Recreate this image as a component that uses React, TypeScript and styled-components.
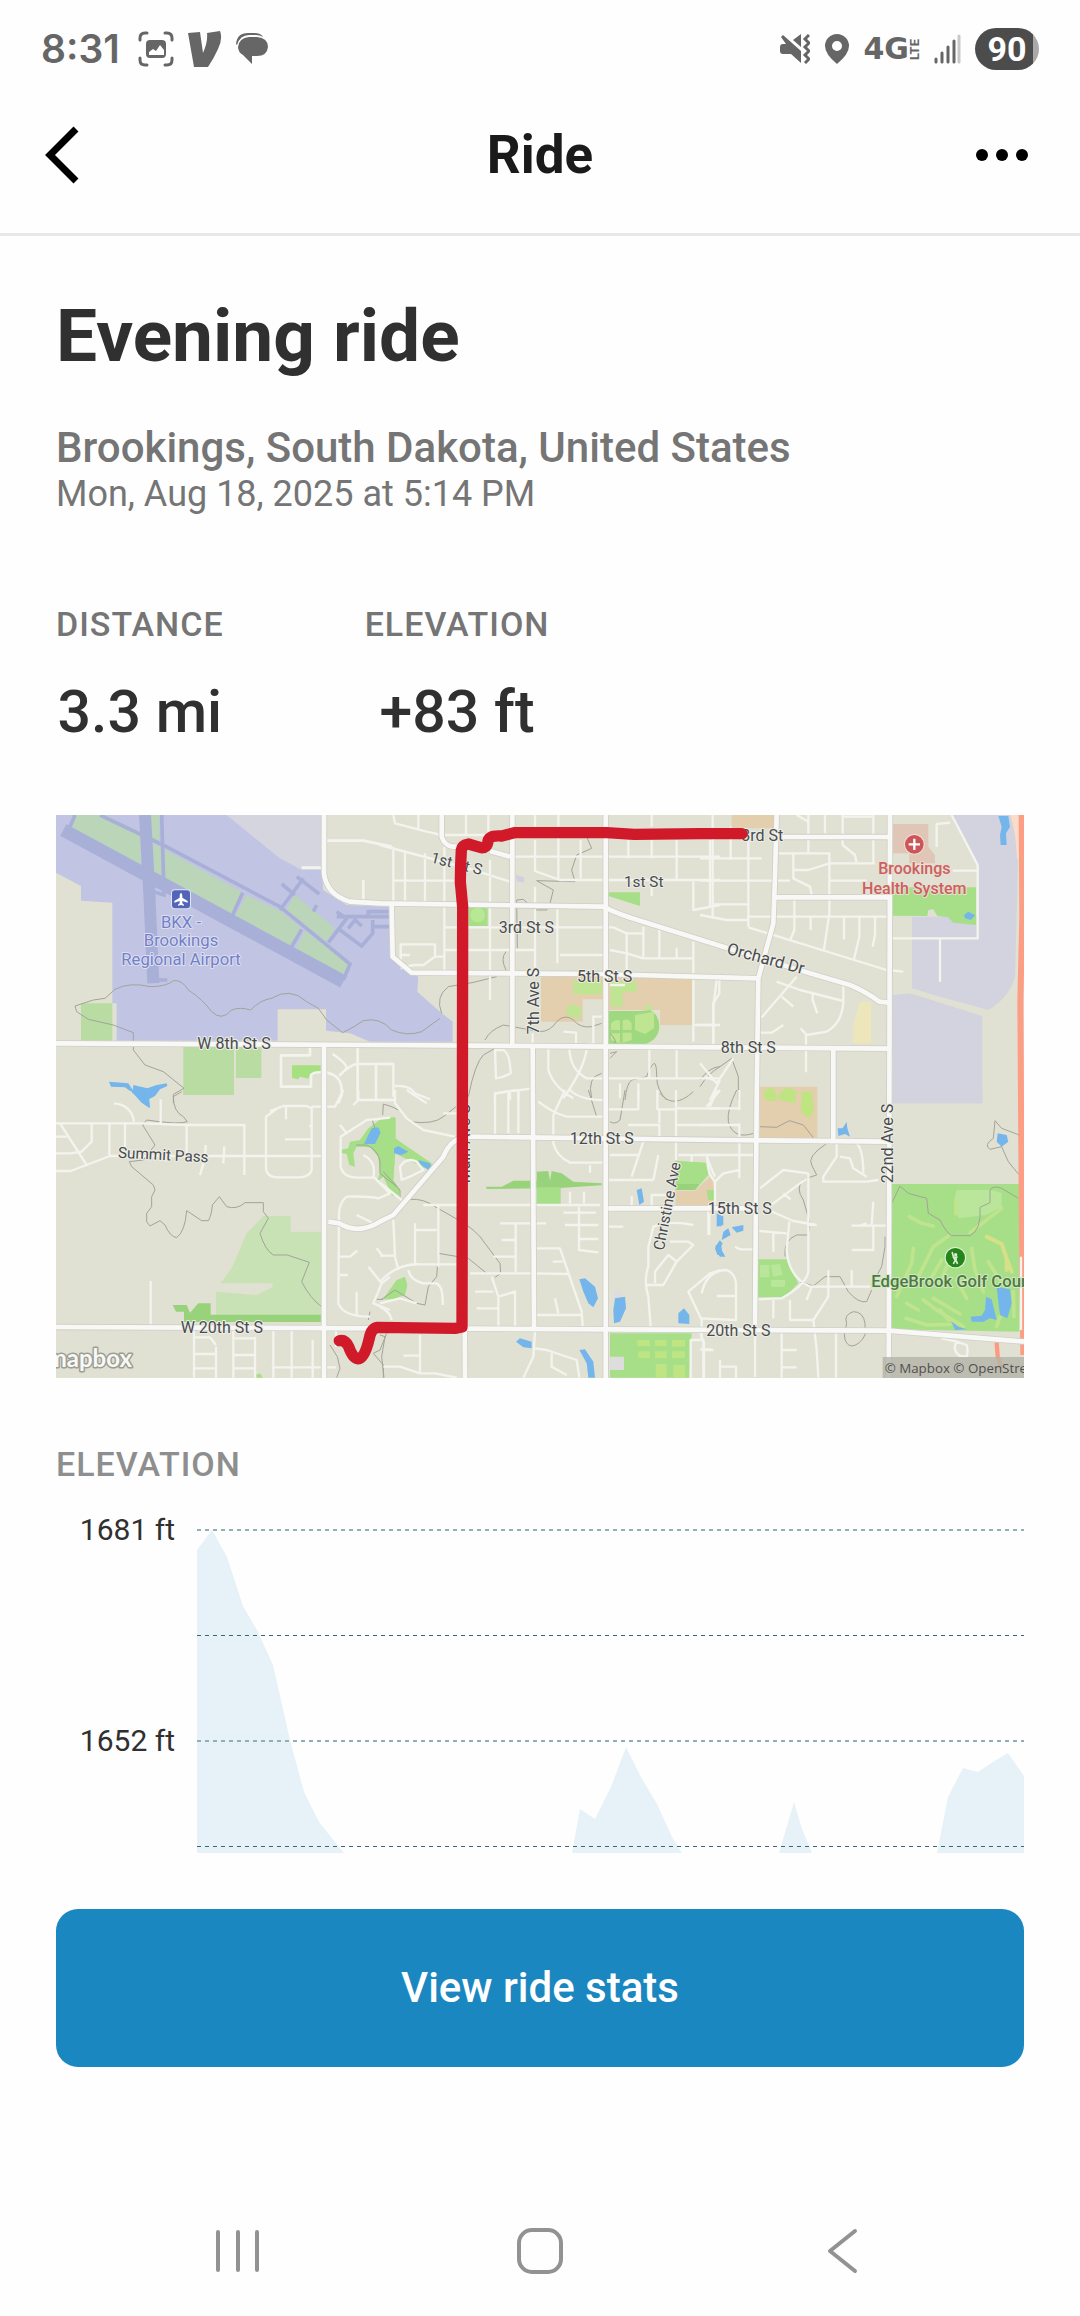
import React from "react";
import styled, { createGlobalStyle } from "styled-components";

const GlobalStyle = createGlobalStyle`
  *, *::before, *::after { box-sizing: border-box; }
  body {
    margin: 0;
    background: #fefefe;
    color: #303030;
    font-family: Roboto, "Liberation Sans", sans-serif;
  }
`;

const Screen = styled.div`
  display: flex;
  flex-direction: column;
  min-height: 100vh;
`;

const StatusBar = styled.div`
  display: flex;
  align-items: center;
  justify-content: space-between;
  height: 76px;
  padding: 22px 41px 0;
  color: #666;
  svg { display: block; flex: none; }
`;

const StatusGroup = styled.div<{ $gap: number }>`
  display: flex;
  align-items: center;
  gap: ${(p) => p.$gap}px;
`;

const Clock = styled.time`
  margin-right: 4px;
  font: 600 39px/48px Inter, sans-serif;
`;

const Network = styled.span`
  display: flex;
  align-items: center;
  font: 700 30px/32px "DejaVu Sans", sans-serif;
`;

const NetworkSuffix = styled.span`
  writing-mode: vertical-rl;
  transform: rotate(180deg);
  font: 700 13px/11px Roboto, sans-serif;
`;

const Battery = styled.span`
  display: grid;
  place-items: center;
  width: 64px;
  height: 42px;
  border-radius: 21px;
  background: linear-gradient(90deg, #4c4c4c 90%, #a9a9a9 90%);
  color: #fff;
  font: 700 34px/42px Roboto, sans-serif;
`;

const Header = styled.header`
  display: grid;
  grid-template-columns: 1fr auto 1fr;
  align-items: center;
  height: 160px;
  padding: 0 40px;
  border-bottom: 3px solid #e8e8e8;
`;

const HeaderTitle = styled.h2`
  margin: 0;
  color: #1a1a1a;
  font-size: 53px;
  line-height: 64px;
  font-weight: 700;
`;

const IconButton = styled.button<{ $end?: boolean }>`
  display: grid;
  place-items: center;
  justify-self: ${(p) => (p.$end ? "end" : "start")};
  padding: 0;
  border: 0;
  background: none;
  color: #000;
  cursor: pointer;
  svg { display: block; }
`;

const Content = styled.main`
  display: flex;
  flex-direction: column;
  padding: 56px 56px 0;
`;

const RideTitle = styled.h1`
  margin: 0 0 44px;
  font-size: 73px;
  line-height: 88px;
  font-weight: 700;
`;

const Place = styled.p`
  margin: 0;
  color: #757575;
  font-size: 42px;
  line-height: 48px;
  font-weight: 500;
`;

const RideDate = styled.p`
  margin: 0;
  color: #757575;
  font-size: 36px;
  line-height: 44px;
`;

const Stats = styled.dl`
  display: flex;
  gap: 141px;
  margin: 88px 0 67px;
`;

const Stat = styled.div`
  display: flex;
  flex-direction: column;
  align-items: center;
  gap: 32px;
`;

const StatLabel = styled.dt`
  color: #757575;
  font-size: 34px;
  line-height: 40px;
  font-weight: 500;
  letter-spacing: 1px;
`;

const StatValue = styled.dd`
  margin: 0;
  font-size: 59px;
  line-height: 72px;
  font-weight: 500;
`;

const MapPicture = styled.svg`
  display: block;
  width: 100%;
  height: auto;
  background: #e0e1d2;
  font-family: Roboto, "Liberation Sans", sans-serif;
`;

const SectionTitle = styled.h3`
  margin: 66px 0 28px;
  color: #8e8e8e;
  font-size: 34px;
  line-height: 40px;
  font-weight: 500;
  letter-spacing: 1px;
`;

const Chart = styled.div`
  display: grid;
  grid-template-columns: 141px 1fr;
  align-items: start;
`;

const AxisLabels = styled.div`
  display: flex;
  flex-direction: column;
  align-items: flex-end;
  gap: 175px;
  padding-right: 22px;
  font-size: 30px;
  line-height: 36px;
`;

const Plot = styled.svg`
  display: block;
  width: 100%;
  height: 341px;
  padding-top: 17px;
`;

const PrimaryButton = styled.button`
  height: 158px;
  margin-top: 56px;
  border: 0;
  border-radius: 22px;
  background: #1b87c0;
  color: #fff;
  font: 500 42px/48px Roboto, sans-serif;
  cursor: pointer;
`;

const SystemNav = styled.nav`
  display: grid;
  grid-template-columns: repeat(3, 1fr);
  height: 130px;
  margin-top: auto;
  padding: 0 87px;
  button { justify-self: center; color: #929292; }
`;

/* The map is drawn on a 2904 x 1689 sheet made of six tiles. */
const TILES = {
  a: "translate(-18 -15)",
  b: "translate(972 -15)",
  c: "translate(1932 -15)",
  d: "translate(-18 825)",
  e: "translate(972 825)",
  f: "translate(1932 825)",
};

const MAJOR_ROADS = [
  "M0 685L972 690L1992 697L2497 701",
  "M1236 965L1992 975L2497 980",
  "M0 1536L1236 1541L2497 1547L2904 1580",
  "M804 0V175Q812 240 882 260L972 265L1642 275Q1690 300 1762 320L1992 392L2262 475L2382 510Q2430 530 2470 560L2497 563",
  "M804 685V1689",
  "M817 1220L850 1225Q905 1260 972 1220L1012 1200L1162 1025Q1185 968 1236 965",
  "M1220 260L1227 1689",
  "M1369 0V688",
  "M1649 0V1689",
  "M1430 692L1434 1545",
  "M1157 0V65Q1165 92 1190 95L1250 95M1302 108L1362 125",
  "M1007 270L1010 425L1067 473L1632 477L2107 490",
  "M2162 0L2157 185L2152 325L2107 490L2102 850L2097 1530",
  "M2502 0L2498 1689",
  "M2160 247H2500M2160 66H2500",
  "M2332 700V975",
  "M1657 1180H2097",
];

function MapAreas() {
  return (
    <g>
      <g transform={TILES.a}>
        <path fill="#d4d5de" d="M530 15H815V185H755L690 145Z" />
        <path fill="#c1c5e3" d="M18 15H530L690 145L755 180H815L820 240L890 285L1025 290V440L1085 490L1105 500L1102 545L1170 605L1208 635V695H960L900 670L828 662V598H683V692H200V580H187V278L93 272V228L18 188Z" />
        <path fill="#bbd5b9" d="M70 15H170L272 78V165L55 52ZM300 15H328V92L305 85ZM308 100L335 112V200L308 190ZM345 120L575 245L545 315L347 212ZM590 255L690 302L755 355L722 412L552 322ZM735 255L855 355L830 395L708 300ZM765 362L900 462L880 502L735 420Z" />
        <path fill="none" stroke="#a9b0d8" strokeWidth="40" d="M40 60L880 515" />
        <path fill="none" stroke="#a9b0d8" strokeWidth="36" d="M285 15L298 250L310 520" />
        <path fill="none" stroke="#a9b0d8" strokeWidth="11" d="M60 50L75 15M150 15L345 108L690 290L900 462L880 510M335 15L342 255L310 245M320 510H352M578 248L548 315M755 358L722 415M690 300L760 205M740 200L808 252M695 222L735 255M800 285L790 305M835 398L890 325L860 305M860 320H1020M955 320V305H1025M870 360L935 408L968 370V330M895 355L915 330L935 348M968 350H1025" />
        <path fill="#b9dca2" d="M93 580H187V692H93ZM400 706H552V855H400ZM558 706H634V804H558Z" />
        <path fill="#a6e080" d="M726 766H812V790L785 790L775 806L750 800L744 808L726 804Z" />
        <path fill="#74b6ec" d="M177 815L235 820L248 840L240 843L225 832L183 830ZM250 825L292 835L320 825L350 820L352 828L330 838L315 858L297 868L300 893L285 870L262 858L247 848Z" />
      </g>
      <g transform={TILES.b}>
        <path fill="#a6df87" d="M266 292H323V348H266ZM685 247H780V288L685 258Z" />
        <circle cx="293" cy="315" r="22" fill="#b9e895" />
        <path fill="#d0d0e0" d="M408 195L432 202V218L410 214Z" />
        <path fill="#e3cead" d="M483 500H940V645H840V600H685V568H608V635H483Z" />
        <path fill="#bfe593" d="M580 510H665V553H580ZM690 515H770V545H728V590H692V545ZM560 590L580 583L606 595L598 628L560 615Z" />
        <path fill="#9fd97f" d="M685 603H780L810 600Q838 615 838 650Q835 690 795 702H685Z" />
        <path fill="#bfe593" d="M765 615L822 605V655L795 672L765 660ZM693 640Q710 625 720 632V660H693ZM728 632Q745 622 755 640V660H728ZM693 670H720V700L693 690ZM728 668H755V690L728 698ZM790 595L810 583L822 600Z" />
      </g>
      <g transform={TILES.c}>
        <path fill="#e3cead" d="M95 15H222V55H95Z" />
        <path fill="#e0c6b6" d="M578 42H685V110L705 135V160H628V130H578Z" />
        <path fill="#d2d3de" d="M755 15H940L955 120L945 500Q930 560 865 600L720 560L636 535V320H833V160L760 30ZM578 555L630 550L847 618V880H578Z" />
        <path fill="#a6df87" d="M578 232H828V345L760 338L745 322L712 318L700 298L685 300L682 318L578 317Z" />
        <path fill="#74b6ec" d="M895 18H925L930 50L918 70L920 105L902 105L900 75L905 50ZM792 315L805 305L826 316L812 330L795 325Z" />
        <path fill="#eee6bb" d="M480 575H513V700H458L462 640Z" />
        <path fill="#e3cead" d="M180 830H352V985H180Z" />
        <path fill="#bfe583" d="M195 840L215 832L230 850V872H200L190 855ZM240 845L265 832L290 845L285 880L235 870ZM305 845L335 845L342 905L325 925L302 905Z" />
      </g>
      <g transform={TILES.d}>
        <path fill="#b9dca2" d="M400 0H552V15H400Z" />
        <path fill="#74b6ec" d="M240 0H315L297 20L299 55L275 38Z" />
        <path fill="#c9e2b5" d="M640 378H722V425H818V675H498V605L620 615L668 590V580H512L545 535L590 430Z" />
        <path fill="#98d37c" d="M368 645H410L420 668L445 640H482V674H818V696H402V665H378Z" />
        <path fill="#a6df87" d="M998 83H1037V145L1090 190L1150 225L1125 235L1035 190L1030 270L1050 300L1045 320L1025 315L1000 260L980 275L990 250L985 200L960 172L920 170L910 190L915 230L898 225L890 192L870 188L872 180L895 175L900 155L930 150L955 115ZM999 628L1040 570L1065 560L1072 585L1065 615L1030 628Z" />
        <path fill="#74b6ec" d="M965 115L985 112L992 128L975 162L942 162Z" />
        <path fill="#a6df87" d="M618 855L630 850L638 863H620Z" />
      </g>
      <g transform={TILES.e}>
        <path fill="#98d37c" d="M318 290L365 290L400 272L470 272V245L505 243L510 272L515 243L545 250L580 275L665 280V286L540 294L320 297Z" />
        <path fill="#a6df87" d="M470 292H542V342H470ZM887 212L980 218L985 255L945 300H887ZM690 730H935L928 863H690ZM0 92L45 80V145L155 220L145 235L45 190L40 270Z" />
        <path fill="#e3cead" d="M887 302H945L995 255L1010 345H887Z" />
        <path fill="#98d37c" d="M887 282H958L945 300H887Z" />
        <path fill="#dcdddc" d="M690 800H732V840H690ZM702 605L715 595L728 620L702 625Z" />
        <path fill="#74b6ec" d="M42 175L55 168L85 185L65 195L42 190ZM115 210L150 220L155 235L145 240L120 222ZM598 568L615 565L645 590L654 625L640 652L625 640L610 605ZM705 625L735 620L738 655L720 695L702 700L700 660ZM895 670L912 655L928 675V702L895 700ZM408 755L420 745L455 755V775L430 772ZM598 780L615 778L640 815L645 863H625L620 820ZM770 300L785 295L792 335L778 345ZM1010 370L1030 380V405L1010 410ZM1005 475L1020 450L1028 490L1012 495Z" />
        <path fill="#bfe583" d="M772 750H810V768H772ZM825 750H860V768H825ZM876 750H915V770H876ZM775 784H810V804H775ZM825 784H860V804H825ZM876 784H915V804H876ZM827 822H860V863H827ZM880 825H915V863H880Z" />
      </g>
      <g transform={TILES.f}>
        <path fill="#a6df87" d="M570 282H958V725L570 718ZM172 508H262L295 580L255 622H172ZM0 220L22 225V255L0 278ZM20 300H47V330H25Z" />
        <path fill="#d2d3de" d="M578 0H847V40H578Z" />
        <path fill="#b9e69a" d="M770 300H875L905 310V350L860 375L775 385L762 330ZM180 525H208V562H180ZM212 525L240 522L248 555L220 560ZM213 570H255V590H213Z" />
        <path fill="none" stroke="#bfe48d" strokeWidth="11" strokeLinecap="round" strokeLinejoin="round" d="M628 380L665 400L700 408M768 330V372M905 355L810 428M745 438L700 470L655 560M640 475L635 520L590 620M690 570L725 510M740 530L715 590M815 475L825 540L850 605M865 515L905 580M770 570L800 625M620 640L655 660M670 630L710 660L790 710M700 625L780 672M618 685L680 705L750 703M720 660L745 690M940 605L942 680M890 710L900 680" />
        <path fill="none" stroke="#d7df87" strokeWidth="12" strokeLinecap="round" strokeLinejoin="round" d="M860 440L905 462L920 505L935 545M920 505V540" />
        <path fill="#74b6ec" d="M890 590L930 598L935 640L922 685L900 675L895 635ZM858 620L875 628L890 690L870 685L850 695H815L812 680L845 677L855 660ZM755 695L775 710L800 718L765 720ZM413 115L428 115L440 95L442 115L450 140L435 132L415 138ZM893 130L920 135L925 155L905 170L890 155ZM52 375L70 380L62 410L52 405ZM95 412L130 405V422L110 428ZM70 425L85 415L92 435L75 445L65 450ZM45 470L60 452L68 460L60 478ZM52 490L68 485L76 500L60 500Z" />
        <path fill="none" stroke="#fb9a80" strokeWidth="13" d="M890 757L893 800L905 835" />
      </g>
      <path fill="none" stroke="#fbdccb" strokeWidth="20" d="M2872 -5Q2890 50 2893 130" />
      <path fill="none" stroke="#fd9d84" strokeWidth="18" d="M2897 -5L2899 300L2893 560L2896 1000L2899 1380L2902 1620" />
    </g>
  );
}

function MapStreams() {
  return (
    <g fill="none" stroke="#a3a39a" strokeWidth="3" strokeLinejoin="round">
      <path transform={TILES.a} d="M402 835L340 785L285 765L250 720V668L190 645L115 628L80 605L75 588L130 570L165 565L195 538Q240 515 300 530Q350 530 370 512Q395 508 415 540Q460 570 485 605Q515 635 545 600Q570 590 602 600Q630 570 665 565Q720 530 770 575L805 595Q820 615 830 630L878 668Q915 650 940 632Q990 620 1025 660Q1070 680 1115 665L1170 625M402 835L370 853V880" />
      <path transform={TILES.b} d="M620 80L635 115L590 135L575 180L585 215L470 212L520 240L510 280L500 300L465 300L430 268L410 270L412 415M378 425Q360 445 378 480M185 610Q165 560 205 530Q280 520 350 500M265 860Q285 760 310 735L345 715M315 690Q330 660 370 645L480 665Q510 665 530 635Q555 610 580 630Q600 655 635 650L665 640M690 670Q710 690 705 700M690 730L710 725L690 745M755 810L800 800Q810 770 822 760Q830 760 830 800Q830 840 860 870M960 830Q985 790 1020 770M735 870Q740 820 755 810M665 790Q620 800 635 865" />
      <path transform={TILES.c} d="M0 810Q30 770 60 770L95 745L115 800V870" />
      <path transform={TILES.d} d="M395 5L370 20Q370 65 400 80L412 95Q390 105 290 90L278 105L315 165L280 210L238 215L245 230L310 285L315 300L305 320V350L290 370V395L300 408L330 392L345 405Q360 440 380 443Q405 425 410 362L455 392H475Q485 375 487 345L508 320L530 350Q560 360 585 338H640V365L655 385L630 430Q645 480 670 495H712L778 517L755 575Q780 625 815 650V690M918 165L950 165Q985 180 990 215V250L1040 290M975 115L965 85M998 75L1000 42Q1030 50 1045 60M980 628H999M840 765L862 800L870 835L860 863M1010 730L990 780L970 790L1000 825V863M955 690L960 665" />
      <path transform={TILES.e} d="M90 95Q160 105 190 80L228 50M90 328Q130 325 165 350L235 390Q290 420 315 460L360 520L362 550L345 562M320 550L265 505L175 490L170 560L145 590L135 645L110 640L45 600L5 628M625 0L650 80M735 0L720 90Q705 105 690 95M840 10Q880 60 940 5M10 245L60 300V330M0 735L15 740L5 800L12 863" />
      <path transform={TILES.f} d="M110 0Q80 60 85 95Q100 150 160 130M180 110L230 112L268 92L310 105L340 143M378 162Q320 200 335 225L350 255L310 268Q285 295 310 330L330 400L325 435L290 435Q250 450 255 500M300 575L340 588L375 560H420L445 605Q475 640 500 635L515 600M515 585L545 530L555 470V440M440 700Q430 675 460 665Q490 665 495 700V735Q480 765 455 768Q435 765 433 735ZM575 340L600 288L625 310L680 325L685 370L720 390Q740 430 755 437H810Q845 420 840 352L870 338V300Q880 285 905 295L955 325M958 135L905 115L885 92L880 145Q850 165 870 178L905 170L925 215L955 252" />
    </g>
  );
}

function MapMinorRoads() {
  return (
    <g fill="none" stroke="#f3f4ee" strokeWidth="8" strokeLinejoin="round">
      <path transform={TILES.a} d="M825 92H940L1025 110M940 210V270M755 173H815M780 706V736H693V830H783V795Q790 785 820 787Q880 790 875 855L865 880M830 830L820 835M848 732Q890 760 890 775L870 795Q900 765 920 762H1030M923 706V870M978 762V870" />
      <path transform={TILES.b} strokeWidth="7" d="M40 15L45 40L140 65L185 75H390M115 15V55M258 15V75M325 15V80M465 15V50M535 15V50M815 15V50M40 110V275M75 120V275M135 130V275M193 110V490M0 105L225 165M265 175L390 215M40 212H225M390 140H1020M465 90V183L540 210H1020M535 85V205M602 90V205M745 90V145M815 90V145M890 90V210M990 90V290M1020 285L940 300V215M815 210V258M330 150V570M465 230V500M532 290V460M195 352H700L740 370H790M195 420H465M540 435H670M62 465V403H165V440L130 465H100L62 475M65 435H90M165 440H190M740 370V480M790 350V440M690 420L740 430L790 445H940M838 360V445M890 415V445M940 395V695M690 525H735M940 645H1020M1010 510L1000 590V695M458 670V700M550 665L588 668V700M665 620H640V700L568 715Q570 780 620 805H1020M620 720Q610 780 550 865M505 715V780Q520 830 580 865M808 715V805M890 715V805M720 820V865M775 820V865M345 720H370Q390 730 392 790L370 800L348 805ZM345 870V850L458 835M390 845V870M415 840V870M0 762H40V860M45 828Q90 825 105 850L150 868" />
      <path transform={TILES.c} strokeWidth="7" d="M38 15V320M92 50V150M145 80V350M0 145H185M0 212H270M0 315L80 330H145M40 283H145M145 352L560 480L610 485M230 130H388V310L372 418M325 15V130M290 15L325 35M375 15V70M428 15V105L465 135L470 160M428 20H520M520 15V160M525 160H388L325 180H280M280 130V205L330 230L335 255M388 212H500M283 265V360L270 392M145 320H560M332 322V360M432 322V388M478 322V380L462 448M525 322V375L518 410M230 515L300 540L430 573M430 520V580Q425 640 380 665L320 675L302 655M290 500L185 622M245 560L280 590M338 545V570L352 610M180 668H215L250 645M318 670V787M58 510V550L40 580V705M0 645H38M0 760L50 820L100 745M60 810L30 870M40 810L15 800M710 110V42L750 38M758 182H833M720 385V515M575 385H833V165L755 15" />
      <path transform={TILES.d} strokeWidth="7" d="M18 100H280L410 105H583V255M30 100L108 222M18 243H62L180 198H820M125 100V155L95 185L62 190H18M18 140H50M178 100V195M225 100V195M410 105V195M332 28V100M192 40Q245 45 252 95M467 165L465 205L450 255M523 170L520 220M350 185L345 215M302 573V705M660 63L700 48H770L785 55V240Q780 260 750 262H680Q650 260 648 235V80L690 50M708 50V88M705 148H785M785 50H855L880 0M778 108H785M1020 83L950 90L872 140V230Q880 262 920 263H970M890 130L870 105M940 195Q980 215 970 260L1020 310L985 325Q960 318 890 320Q865 340 867 380L865 640Q880 680 960 680M920 375L970 400M865 500H900L922 482M980 475L1000 500M865 555H893M920 605V680M955 530L995 580L1020 560M995 580L970 640L1020 660M432 720V863M498 770V863M432 792H498M432 835H498M432 742H480L498 765M550 720V863M615 740V863M550 745H615M550 795H615M550 835H615M670 720V863M725 720V863M788 750V863M665 832H858M858 720L858 770M910 45L925 30V0M925 30H1030" />
      <path transform={TILES.e} strokeWidth="7" d="M45 0V40L80 85L130 120L225 140M0 30H45M80 0L140 40M190 70H230M345 135V10L410 0M385 0V130M415 0V130M60 230Q80 200 110 215L130 240L90 260L65 270ZM0 278L65 330M40 390L45 500L55 540M0 497H45M105 400V520M105 420H170M175 345V530M0 575Q50 520 120 523H230M130 345H660M85 540Q90 570 130 580H170Q190 590 188 645M0 650Q30 665 35 690M0 640L60 625L110 640M270 550H460L565 552M335 560L355 620V710M285 605H340M290 655H355M355 620L405 605V710M360 400H498M365 450H410M407 400V545M340 500H405M470 475H540L605 665L608 710M518 515H548M470 675H605M525 625L535 670M550 368H648M597 350V480L655 487M555 405H655M597 447H655M475 35Q520 70 560 80H670M520 75V160Q530 200 570 218H668M555 0L520 75M630 225V248M570 0Q600 30 670 30M570 305V340M612 305V340M684 58H775V0M745 105H838V145M838 100V55M832 0V58H888M690 195H775M790 155L755 260M835 195L820 270M888 0V210M890 55H1020M890 105H1020M895 195H1020M685 270H820M755 318V350M815 350V315H860M685 410H730M935 215V195M980 200Q995 240 1005 260M988 370V435M940 405Q870 390 820 410L805 470L805 530Q790 570 805 620L812 710M870 455H925L940 465L890 515L850 585H800M825 580V545L865 495L890 515M1020 540L990 550L925 605L965 690V745M500 780L590 810L598 863M515 790V830L560 855M465 775L500 780M70 797H120M120 735V850M10 830H60L120 850H165L230 863M465 725L460 800L430 863M932 863V750H970V863M970 780H1000M1010 0L990 50" />
      <path transform={TILES.f} strokeWidth="7" d="M20 50L60 0M25 55H120M118 0V60M0 105H118M118 100V265M0 195H160M22 200Q20 250 45 275L70 250L118 240M45 270V350M25 360V435M105 470L120 478H160M180 295L250 240L325 250M200 355L320 265M250 310L272 328M325 250V540Q325 580 245 625L175 628M205 360L280 393L350 405M178 423L260 430M268 395L260 480Q265 560 330 590H510M220 430V485M270 630V690H340M320 630L335 590M385 540V620L340 690L350 780L355 863M220 630V685M455 540V590M410 150V200L370 260V275H500L535 270M420 200L450 205L460 235L500 260M470 160Q490 180 490 250M520 335L515 405M455 407H560M480 407L500 400M520 410V480H455M5 610Q20 540 80 540Q105 550 108 580V690L0 685M50 618H108M0 725L12 760V863M0 778H35M60 863V810M60 830H108V863M245 725V863M245 780H290M245 832H290M408 725V863M165 740V860M725 745L770 755L800 765Q805 780 800 800L780 798Q755 780 770 755M963 500V720" />
    </g>
  );
}

function MapLabels() {
  return (
    <g fontSize="48" fill="#484b50" stroke="#eeeee6" strokeWidth="6" strokeLinejoin="round" paintOrder="stroke">
      <g textAnchor="middle" fill="#7480c6" stroke="#dcdff2" fontSize="50">
        <text x="375" y="339">BKX -</text>
        <text x="375" y="394">Brookings</text>
        <text x="375" y="450">Regional Airport</text>
      </g>
      <text x="424" y="702">W 8th St S</text>
      <text x="185" y="1028" fontSize="46" transform="rotate(3 185 1028)">Summit Pass</text>
      <text x="374" y="1555">W 20th St S</text>
      <text x="1122" y="142" fontSize="46" transform="rotate(14 1122 142)">1st St S</text>
      <text x="1704" y="215" fontSize="46">1st St</text>
      <text x="1328" y="355">3rd St S</text>
      <text x="1563" y="500">5th St S</text>
      <text transform="translate(1449 658) rotate(-90)">7th Ave S</text>
      <text transform="translate(1242 1105) rotate(-90)">Main Ave S</text>
      <text x="1541" y="988">12th St S</text>
      <text fontSize="46" transform="translate(1823 1308) rotate(-79)">Christine Ave</text>
      <text x="1955" y="1198">15th St S</text>
      <text x="1951" y="1562">20th St S</text>
      <text x="1994" y="715">8th St S</text>
      <text x="2056" y="78">3rd St</text>
      <text fontSize="50" transform="translate(2010 416) rotate(15)">Orchard Dr</text>
      <text transform="translate(2512 1105) rotate(-90)">22nd Ave S</text>
      <g textAnchor="middle" fill="#cc5f60" fontWeight="500" stroke="#e8ded2">
        <text x="2575" y="176">Brookings</text>
        <text x="2575" y="237">Health System</text>
      </g>
      <text x="2446" y="1416" fontSize="50" fill="#4a7a42" stroke="#d5e8c4" fontWeight="500">EdgeBrook Golf Course</text>
    </g>
  );
}

function RideMap() {
  return (
    <MapPicture viewBox="0 0 2904 1689" role="img" aria-label="Map of the ride">
      <MapAreas />
      <MapStreams />
      <MapMinorRoads />
      <g fill="none" strokeLinejoin="round">
        {MAJOR_ROADS.map((d) => <path key={d} d={d} stroke="#cfcfc8" strokeWidth="19" />)}
        {MAJOR_ROADS.map((d) => <path key={d} d={d} stroke="#f8f8f6" strokeWidth="14" />)}
      </g>
      <MapLabels />
      <g transform="translate(375 253)">
        <rect x="-30" y="-30" width="60" height="60" rx="12" fill="#e2e4f5" />
        <rect x="-27" y="-27" width="54" height="54" rx="9" fill="#5265b8" />
        <path fill="#fff" d="M0 -20Q4 -18 4 -10V-5L20 5V10L4 5V12L9 16V19L0 17L-9 19V16L-4 12V5L-20 10V5L-4 -5V-10Q-4 -18 0 -20Z" />
      </g>
      <g transform="translate(2575 88)">
        <circle r="31" fill="#f1dfda" />
        <circle r="28" fill="#cc5558" />
        <path stroke="#fff" strokeWidth="7" d="M-17 0H17M0 -17V17" />
      </g>
      <g transform="translate(2698 1328)">
        <circle r="32" fill="#e2f2d6" />
        <circle r="29" fill="#23851a" />
        <circle cx="1" cy="-9" r="5" fill="#d9ecd2" />
        <path fill="none" stroke="#d9ecd2" strokeWidth="5" strokeLinecap="round" d="M-9 -15L-5 0L5 -2M0 0V7L-5 17M1 6L6 17" />
        <path stroke="#d9ecd2" strokeWidth="9" d="M0 -3V7" />
      </g>
      <path
        fill="none"
        stroke="#d01a2a"
        strokeWidth="34"
        strokeLinecap="round"
        strokeLinejoin="round"
        d="M2058 56H1932L1735 58L1652 53H1375L1337 63Q1300 60 1296 78Q1294 100 1275 98L1237 87Q1218 90 1216 105L1214 150L1213 200L1220 275L1219 1000L1218 1536L1200 1540L965 1537Q945 1540 940 1570Q925 1635 905 1631Q890 1630 878 1595Q868 1573 850 1577"
      />
      <text x="228" y="1656" textAnchor="end" fontSize="72" fontWeight="700" fontFamily="Lato, sans-serif" fill="#f8f8f4" stroke="#9c9d94" strokeWidth="9" strokeLinejoin="round" paintOrder="stroke">mapbox</text>
      <rect x="2480" y="1626" width="424" height="63" fill="#b3b4a8" fillOpacity="0.8" />
      <text x="2486" y="1675" fontSize="40" fontFamily="'Open Sans', sans-serif" fill="#505050">© Mapbox © OpenStreetMap</text>
    </MapPicture>
  );
}

const AREA =
  "M0 324V21L15 1L30 28L46 77L61 103L76 136L93 211L107 263L122 293L138 313L147 324Z" +
  "M375 324L383 280L398 290L414 258L429 218L445 250L460 275L475 308L485 324Z" +
  "M582 324L597 273L605 300L615 324Z" +
  "M740 324L751 268L766 239L781 243L796 233L811 224L827 247V324Z";

const GRID_LINES = [
  { y: 1, width: 2, color: "#8fb0b4" },
  { y: 106.5, width: 1, color: "#356a74" },
  { y: 212, width: 2, color: "#8fb0b4" },
  { y: 317.5, width: 1, color: "#356a74" },
];

function ElevationChart() {
  return (
    <Chart>
      <AxisLabels>
        <span>1681 ft</span>
        <span>1652 ft</span>
      </AxisLabels>
      <Plot viewBox="0 0 827 324" preserveAspectRatio="none" role="img" aria-label="Elevation profile">
        <path d={AREA} fill="#e6f2f8" />
        {GRID_LINES.map((line) => (
          <line key={line.y} x1="0" x2="827" y1={line.y} y2={line.y} stroke={line.color} strokeWidth={line.width} strokeDasharray="4 4" />
        ))}
      </Plot>
    </Chart>
  );
}

function StatusIcons() {
  return (
    <StatusBar>
      <StatusGroup $gap={14}>
        <Clock>8:31</Clock>
        <svg width="36" height="36" viewBox="0 0 36 36" fill="none" stroke="currentColor" strokeWidth="3">
          <path strokeLinecap="round" d="M2 9V7Q2 2 7 2H9M27 2H29Q34 2 34 7V9M34 27V29Q34 34 29 34H27M9 34H7Q2 34 2 29V27" />
          <rect x="8" y="9" width="20" height="18" rx="4" fill="currentColor" stroke="none" />
          <path fill="#fefefe" stroke="none" d="M11 24V21L15 18L18 20L22 14L26 19V24Z" />
        </svg>
        <svg width="34" height="36" viewBox="0 0 34 36" fill="currentColor">
          <path d="M0 2L12 1L15 22Q20 11 19 2L32 0Q35 8 30 18Q26 27 20 36H6Z" />
        </svg>
        <svg width="32" height="32" viewBox="0 0 32 32" fill="currentColor">
          <path d="M0 11Q1 0 12 0H18Q25 0 27 4Q24 2 20 2H13Q4 2 1 12Z" />
          <path d="M13 4H21Q32 5 32 14Q31 23 21 23H16V31L7 22Q2 19 2 14Q3 5 13 4Z" />
        </svg>
      </StatusGroup>
      <StatusGroup $gap={14}>
        <svg width="30" height="30" viewBox="0 0 30 30" fill="currentColor">
          <path d="M0 13Q0 10 3 10H6L1 3L3 1L21 17V29L11 20H3Q0 20 0 17ZM13 6L21 0V13Z" />
          <path fill="none" stroke="currentColor" strokeWidth="3" d="M29 1L25 5L29 9L25 13L29 17L25 21L29 25L25 29" />
        </svg>
        <svg width="26" height="30" viewBox="0 0 26 30" fill="currentColor" fillRule="evenodd">
          <path d="M13 0A12 12 0 0 1 25 12Q25 20 13 30Q1 20 1 12A12 12 0 0 1 13 0ZM13 7A5 5 0 1 0 13 17A5 5 0 1 0 13 7Z" />
        </svg>
        <Network>4G<NetworkSuffix>LTE</NetworkSuffix></Network>
        <svg width="27" height="30" viewBox="0 0 27 30" stroke="currentColor" strokeWidth="3" strokeLinecap="round">
          <path d="M2 25V28M8 19V28M14 13V28M20 7V28" />
          <path stroke="#c8c8c8" d="M25 2V28" />
        </svg>
        <Battery>90</Battery>
      </StatusGroup>
    </StatusBar>
  );
}

export default function App() {
  return (
    <Screen>
      <GlobalStyle />
      <StatusIcons />
      <Header>
        <IconButton aria-label="Back">
          <svg width="44" height="60" viewBox="0 0 44 60" fill="none" stroke="currentColor" strokeWidth="7">
            <path d="M36 4L10 30L36 56" />
          </svg>
        </IconButton>
        <HeaderTitle>Ride</HeaderTitle>
        <IconButton $end aria-label="More options">
          <svg width="76" height="60" viewBox="0 0 76 60" fill="currentColor">
            <circle cx="18" cy="30" r="6" />
            <circle cx="38" cy="30" r="6" />
            <circle cx="58" cy="30" r="6" />
          </svg>
        </IconButton>
      </Header>
      <Content>
        <RideTitle>Evening ride</RideTitle>
        <Place>Brookings, South Dakota, United States</Place>
        <RideDate>Mon, Aug 18, 2025 at 5:14 PM</RideDate>
        <Stats>
          <Stat>
            <StatLabel>DISTANCE</StatLabel>
            <StatValue>3.3 mi</StatValue>
          </Stat>
          <Stat>
            <StatLabel>ELEVATION</StatLabel>
            <StatValue>+83 ft</StatValue>
          </Stat>
        </Stats>
        <RideMap />
        <SectionTitle>ELEVATION</SectionTitle>
        <ElevationChart />
        <PrimaryButton>View ride stats</PrimaryButton>
      </Content>
      <SystemNav>
        <IconButton aria-label="Recent apps">
          <svg width="48" height="48" viewBox="0 0 48 48" stroke="currentColor" strokeWidth="4" strokeLinecap="round">
            <path d="M4 5V43M24 5V43M43 5V43" />
          </svg>
        </IconButton>
        <IconButton aria-label="Home">
          <svg width="48" height="48" viewBox="0 0 48 48" fill="none" stroke="currentColor" strokeWidth="4">
            <rect x="3" y="3" width="42" height="42" rx="13" />
          </svg>
        </IconButton>
        <IconButton aria-label="System back">
          <svg width="48" height="48" viewBox="0 0 48 48" fill="none" stroke="currentColor" strokeWidth="4" strokeLinecap="round" strokeLinejoin="round">
            <path d="M37 4L12 24L37 44" />
          </svg>
        </IconButton>
      </SystemNav>
    </Screen>
  );
}
